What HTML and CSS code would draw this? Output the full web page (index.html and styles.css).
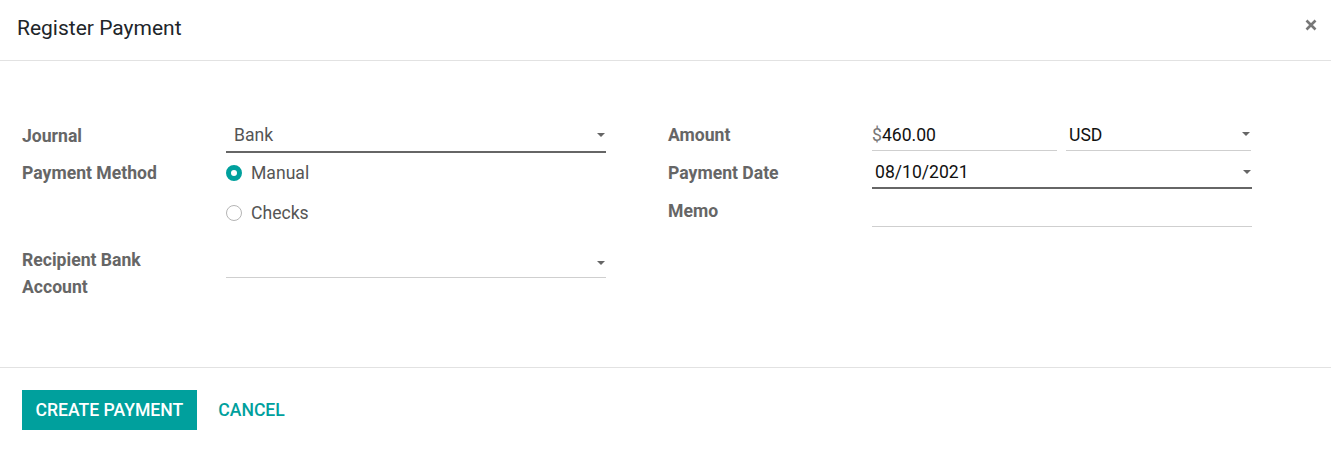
FILE: index.html
```html
<!DOCTYPE html>
<html lang="en">
<head>
    <meta charset="UTF-8">
    <meta name="viewport" content="width=device-width, initial-scale=1.0">
    <title>Register Payment</title>
    <link rel="stylesheet" href="styles.css">
</head>
<body>

<div class="modal">
    <div class="modal-header">
        <h4 class="modal-title">Register Payment</h4>
        <button class="close" type="button" aria-label="Close">
            <svg width="12" height="12" viewBox="0 0 12 12">
                <path d="M1.5 1.5 L10.5 10.5 M10.5 1.5 L1.5 10.5" stroke="#777" stroke-width="2.6" stroke-linecap="butt"/>
            </svg>
        </button>
    </div>

    <div class="modal-body">
        <div class="group">
            <label class="field-label row-1">Journal</label>
            <div class="field select focus row-1">
                <span class="value muted">Bank</span>
                <span class="caret"></span>
            </div>

            <label class="field-label row-2">Payment Method</label>
            <div class="radios">
                <div class="radio-item">
                    <span class="radio checked"></span>
                    <span>Manual</span>
                </div>
                <div class="radio-item">
                    <span class="radio"></span>
                    <span>Checks</span>
                </div>
            </div>

            <label class="field-label row-3">Recipient Bank<br>Account</label>
            <div class="field select row-3">
                <span class="value"></span>
                <span class="caret"></span>
            </div>
        </div>

        <div class="group group-right">
            <label class="field-label">Amount</label>
            <div class="amount">
                <div class="field">
                    <span class="value"><span class="currency">$</span>460.00</span>
                </div>
                <div class="field select">
                    <span class="value">USD</span>
                    <span class="caret"></span>
                </div>
            </div>

            <label class="field-label">Payment Date</label>
            <div class="field select focus">
                <span class="value">08/10/2021</span>
                <span class="caret"></span>
            </div>

            <label class="field-label">Memo</label>
            <div class="field">
                <span class="value"></span>
            </div>
        </div>
    </div>

    <div class="modal-footer">
        <button class="btn btn-primary" type="button">Create Payment</button>
        <button class="btn btn-link" type="button">Cancel</button>
    </div>
</div>

</body>
</html>
```

FILE: styles.css
```css
body {
    margin: 0;
    background: #ffffff;
    font-family: 'Roboto', 'Liberation Sans', sans-serif;
    color: #212529;
}

.modal {
    width: 1331px;
    height: 459px;
    background: #ffffff;
}

.modal-header {
    height: 61px;
    display: flex;
    align-items: center;
    justify-content: space-between;
    padding: 0 14px 0 17px;
    border-bottom: 1px solid #e2e2e2;
    box-sizing: border-box;
}

.modal-title {
    margin: 0;
    margin-top: -4px;
    font-size: 21px;
    font-weight: 400;
    color: #212529;
}

.close {
    background: none;
    border: none;
    padding: 0;
    margin-top: -10px;
    cursor: pointer;
    display: flex;
}

.modal-body {
    height: 307px;
    box-sizing: border-box;
    padding: 58px 22px 0 22px;
    display: flex;
    gap: 62px;
    border-bottom: 1px solid #e2e2e2;
}

.group {
    display: grid;
    grid-template-columns: 204px 380px;
    grid-auto-rows: min-content;
    row-gap: 4px;
    align-content: start;
}

.field-label {
    font-size: 17.6px;
    font-weight: 700;
    color: #666666;
    line-height: 34px;
}

.field {
    position: relative;
    height: 34px;
    border-bottom: 1px solid #cfcfcf;
    box-sizing: border-box;
    display: flex;
    align-items: center;
    font-size: 17.6px;
}

.field.focus {
    border-bottom: 2px solid #666666;
}

.field .value {
    padding-left: 3px;
    line-height: 32px;
    color: #111111;
}

.field .value.muted {
    color: #555555;
    padding-left: 8px;
}

.currency {
    color: #777777;
    margin-left: -3px;
}

.caret {
    position: absolute;
    right: 1px;
    top: 14px;
    width: 0;
    height: 0;
    border-left: 4.5px solid transparent;
    border-right: 4.5px solid transparent;
    border-top: 4px solid #666666;
}

.group-right {
    row-gap: 6px;
}

.group-right .field-label {
    line-height: 32px;
}

.group-right .field {
    height: 32px;
}

.group-right .field .value {
    line-height: 30px;
}

.group-right .caret {
    top: 13px;
}

.amount {
    display: grid;
    grid-template-columns: 185px 185px;
    column-gap: 9px;
}

.row-1 {
    margin-bottom: -4px;
}

.radios {
    display: flex;
    flex-direction: column;
}

.radio-item {
    height: 40px;
    display: flex;
    align-items: center;
    gap: 9px;
    font-size: 17.6px;
    color: #555555;
}

.radio {
    width: 16px;
    height: 16px;
    border-radius: 50%;
    border: 1px solid #b5b5b5;
    box-sizing: border-box;
}

.radio.checked {
    border: 5px solid #00a09d;
    background: #ffffff;
}

.row-2 {
    line-height: 40px;
}

.field-label.row-3 {
    line-height: 27px;
    padding-top: 10px;
}

.field.row-3 {
    margin-top: 10px;
    height: 31px;
}

.field.row-3 .caret {
    top: 14px;
}

.modal-footer {
    padding: 22px 22px;
    display: flex;
    gap: 8px;
}

.btn {
    height: 40px;
    padding: 0 13.5px;
    border: none;
    font-family: 'Roboto', 'Liberation Sans', sans-serif;
    font-size: 17.6px;
    font-weight: 500;
    text-transform: uppercase;
    cursor: pointer;
}

.btn-primary {
    background: #00a09d;
    color: #ffffff;
}

.btn-link {
    background: none;
    color: #00a09d;
}
```
